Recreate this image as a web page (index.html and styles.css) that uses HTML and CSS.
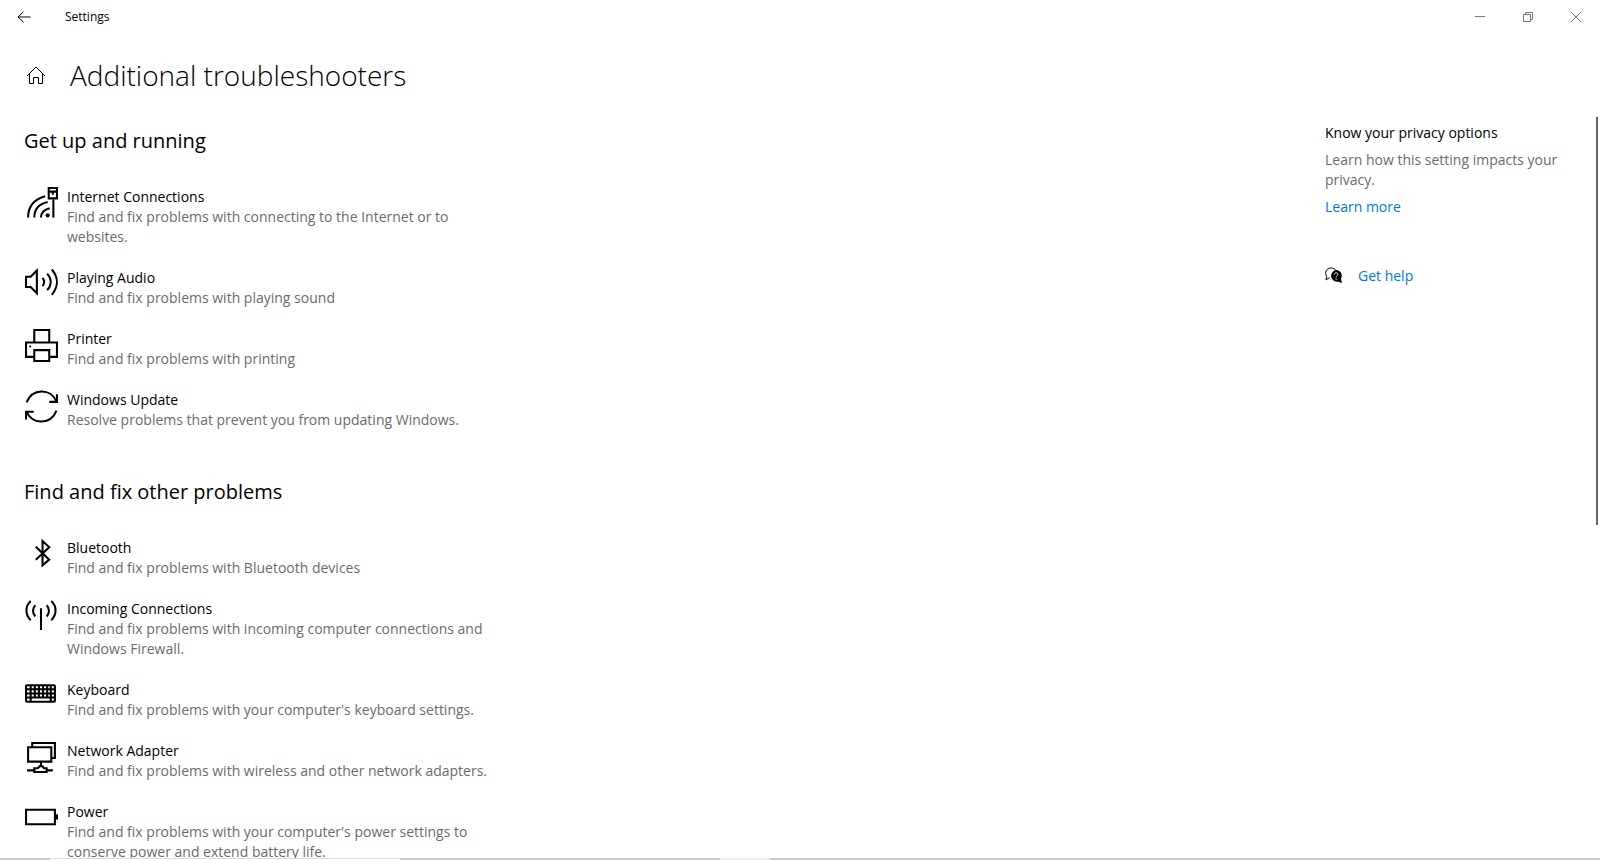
FILE: index.html
```html
<!DOCTYPE html>
<html lang="en">
  <head>
    <meta charset="utf-8">
    <meta name="viewport" content="width=device-width, initial-scale=1">
    <title>Settings</title>
    <link rel="stylesheet" href="styles.css">
  </head>

  <body>
    <header class="titlebar">
      <button type="button" class="titlebar__back" aria-label="Back">
        <svg width="14" height="12" viewBox="0 0 14 12"><path d="M6.5 .8 1 6l5.500 5.200M1 6h12.500"/></svg>
      </button>
      <span class="titlebar__name">Settings</span>
      <button type="button" class="titlebar__control" aria-label="Minimize">
        <svg width="12" height="12" viewBox="0 0 12 12"><path d="M1 5.500h10"/></svg>
      </button>
      <button type="button" class="titlebar__control" aria-label="Restore">
        <svg width="12" height="12" viewBox="0 0 12 12"><path d="M1.500 3.500h7v7h-7zM3.500 3.500v-2h7v7h-2"/></svg>
      </button>
      <button type="button" class="titlebar__control" aria-label="Close">
        <svg width="12" height="12" viewBox="0 0 12 12"><path d="M1 1l10 10M11 1 1 11"/></svg>
      </button>
    </header>

    <div class="page-header">
      <button type="button" class="page-header__home" aria-label="Home">
        <svg width="20" height="20" viewBox="0 0 20 20"><path d="M1 11 10 2l9 9M3.500 9v9.500h4v-6h5v6h4V9"/></svg>
      </button>
      <h1>Additional troubleshooters</h1>
    </div>

    <div class="content">
      <main class="troubleshooters">
        <section class="group">
          <h2>Get up and running</h2>
          <ul class="list">
            <li class="item">
              <svg class="item__icon" viewBox="0 0 32 32">
                <path d="M3 29.500C3 19 9 12 19.500 9M9 29.500c0-8 4-13 13-15M15.500 29.500c0-5 2.500-7.500 8.500-9M27.500 12v17.500"/>
                <path d="M23 1h8v10h-8zM23 4.500h8M27 4.500v3"/>
                <circle class="fill" cx="22" cy="27.500" r="2"/>
              </svg>
              <div class="item__text">
                <h3>Internet Connections</h3>
                <p>Find and fix problems with connecting to the Internet or to websites.</p>
              </div>
            </li>
            <li class="item">
              <svg class="item__icon" viewBox="0 0 32 32">
                <path d="M1 8.500h4.500L11.500 2.500v22l-6-6H1zM17 9.500c2 2.500 2 5.500 0 8M21.500 5.500c4.500 5 4.500 11 0 16M26 1.500c6.500 7.500 6.500 16.500 0 24.500"/>
              </svg>
              <div class="item__text">
                <h3>Playing Audio</h3>
                <p>Find and fix problems with playing sound</p>
              </div>
            </li>
            <li class="item">
              <svg class="item__icon" viewBox="0 0 32 32">
                <path d="M9 13V1h14.500v12M9 27H1V13h30v14h-7.500M9 20.500h14.500v10.500H9z"/>
                <circle class="fill" cx="5" cy="17" r="1"/>
              </svg>
              <div class="item__text">
                <h3>Printer</h3>
                <p>Find and fix problems with printing</p>
              </div>
            </li>
            <li class="item">
              <svg class="item__icon" viewBox="0 0 32 32">
                <path d="M1.500 12C7-2 25-2 30.500 11M31 4v7.500h-7.500M30.500 20C25 34 7 34 1.500 21M1 28.500V21h7.500"/>
              </svg>
              <div class="item__text">
                <h3>Windows Update</h3>
                <p>Resolve problems that prevent you from updating Windows.</p>
              </div>
            </li>
          </ul>
        </section>

        <section class="group">
          <h2>Find and fix other problems</h2>
          <ul class="list">
            <li class="item">
              <svg class="item__icon" viewBox="0 0 32 32">
                <path d="M10.500 8.500 23.500 21l-6.500 5.500V3l6.500 6-13 12"/>
              </svg>
              <div class="item__text">
                <h3>Bluetooth</h3>
                <p>Find and fix problems with Bluetooth devices</p>
              </div>
            </li>
            <li class="item">
              <svg class="item__icon" viewBox="0 0 32 32">
                <path d="M15.500 9v21M5.500 2c-5.500 5-5.500 13.500 0 18.500M10 6c-3 3-3 8 0 11M21 6c3 3 3 8 0 11M25.500 2c5.500 5 5.500 13.500 0 18.500"/>
              </svg>
              <div class="item__text">
                <h3>Incoming Connections</h3>
                <p>Find and fix problems with incoming computer connections and Windows Firewall.</p>
              </div>
            </li>
            <li class="item">
              <svg class="item__icon" viewBox="0 0 32 32">
                <rect x="1" y="5" width="28" height="16" rx="1"/>
                <path d="M1 9h28M1 13h28M1 17h28M5.500 5v16M9.500 5v12M13.500 5v12M17.500 5v12M21.500 5v12M25 5v16"/>
              </svg>
              <div class="item__text">
                <h3>Keyboard</h3>
                <p>Find and fix problems with your computer's keyboard settings.</p>
              </div>
            </li>
            <li class="item">
              <svg class="item__icon" viewBox="0 0 32 32">
                <path d="M3 6h22.500v14H3zM7 5.500V2h22v14.500h-3M15.500 20.500v4M2 28.500h6.500M20.500 28.500H27M9 26.500h3.500l1.500-2h3l1.500 2H21V30H9z"/>
              </svg>
              <div class="item__text">
                <h3>Network Adapter</h3>
                <p>Find and fix problems with wireless and other network adapters.</p>
              </div>
            </li>
            <li class="item">
              <svg class="item__icon" viewBox="0 0 32 32">
                <path d="M1 7.500h28v14H1z"/>
                <path class="fill" d="M29 12h3v5h-3z"/>
              </svg>
              <div class="item__text">
                <h3>Power</h3>
                <p>Find and fix problems with your computer's power settings to conserve power and extend battery life.</p>
              </div>
            </li>
          </ul>
        </section>
      </main>

      <aside class="sidebar">
        <h3>Know your privacy options</h3>
        <p>Learn how this setting impacts your privacy.</p>
        <a href="#">Learn more</a>
        <div class="sidebar__help">
          <svg width="18" height="18" viewBox="0 0 18 18">
            <path class="outline" d="M4.500 10.500 1 13l.8-3.500C-1 5.500 1.500 1 6 1c2.500 0 4 1 4.800 2.500"/>
            <path d="M11 3a5.800 5.800 0 0 1 5 8.800l1 4.200-3.800-1.300A5.800 5.800 0 1 1 11 3z"/>
            <path class="mark" d="M9.300 7.500c0-2.300 3.600-2.200 3.600 0 0 1.300-1.800 1.200-1.800 2.800M11.100 11.500v1.300"/>
          </svg>
          <a href="#">Get help</a>
        </div>
      </aside>

      <div class="scrollbar"><div class="scrollbar__thumb"></div></div>
    </div>

    <footer class="taskbar">
      <span class="taskbar__search"></span>
      <span class="taskbar__active"></span>
    </footer>
  </body>
</html>
```
FILE: styles.css
```css
* {
    box-sizing: border-box;
}
body {
    display: flex;
    flex-direction: column;
    height: 100vh;
    margin: 0;
    overflow: hidden;
    font-family: "Segoe UI", "Open Sans", "Noto Sans", sans-serif;
    font-size: 14px;
    line-height: 20px;
    color: #000;
    background: #fff;
}
h1, h2, h3, p, ul {
    margin: 0;
    padding: 0;
    font-weight: 400;
}
h3 {
    font-size: 14px;
}
p {
    color: #6b6b6b;
}
button {
    display: flex;
    align-items: center;
    justify-content: center;
    padding: 0;
    border: none;
    background: none;
}
svg {
    flex: none;
    fill: none;
    stroke: #000;
}
a {
    color: #0078d7;
    text-decoration: none;
}

.titlebar {
    display: flex;
    flex: none;
    height: 33px;
}
.titlebar__back {
    width: 48px;
}
.titlebar__name {
    flex: 1;
    padding-left: 17px;
    font-size: 12px;
    line-height: 34px;
}
.titlebar__control {
    width: 48px;
}
.titlebar__control svg {
    stroke: #777;
}

.page-header {
    display: flex;
    flex: none;
    align-items: center;
    gap: 24px;
    height: 83px;
    padding-left: 26px;
}
.page-header h1 {
    font-size: 28px;
    font-weight: 300;
    line-height: 40px;
}

.content {
    display: flex;
    flex: 1;
    min-height: 0;
}
.troubleshooters {
    flex: 1;
    padding: 11px 0 0 24px;
    overflow: hidden;
}
.group {
    max-width: 470px;
    margin-bottom: 48px;
}
.group h2 {
    margin-bottom: 32px;
    font-size: 20px;
    line-height: 28px;
}
.list {
    display: flex;
    flex-direction: column;
    gap: 21px;
    padding-left: 1px;
    list-style: none;
}
.item {
    display: flex;
    gap: 9px;
}
.item__icon {
    width: 33px;
    height: 33px;
    stroke-width: 2;
}
.item__icon .fill {
    fill: #000;
    stroke: none;
}
.item__text {
    flex: 1;
}

.sidebar {
    width: 240px;
    margin-right: 31px;
    padding-top: 7px;
}
.sidebar p {
    margin: 7px 0 7px;
}
.sidebar__help {
    display: flex;
    align-items: center;
    gap: 15px;
    margin-top: 49px;
}
.sidebar__help svg {
    fill: #000;
    stroke: none;
}
.sidebar__help .outline {
    fill: none;
    stroke: #000;
}
.sidebar__help .mark {
    fill: none;
    stroke: #fff;
}

.scrollbar {
    width: 4px;
}
.scrollbar__thumb {
    width: 2px;
    height: 55%;
    margin-top: 1px;
    background: #666;
}

.taskbar {
    display: flex;
    flex: none;
    gap: 320px;
    height: 2px;
    padding-left: 50px;
    background: #ccc;
}
.taskbar__search {
    width: 350px;
    border-top: 1px solid #ddd;
    background: #fff;
}
.taskbar__active {
    width: 50px;
    background: #eee;
}
```
